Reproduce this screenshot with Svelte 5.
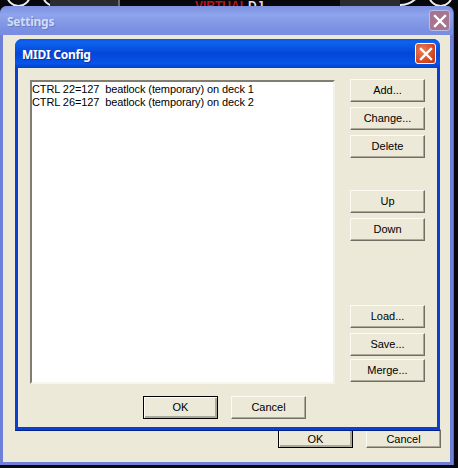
<script>
  const topButtons = ['Add...', 'Change...', 'Delete'];
  const moveButtons = ['Up', 'Down'];
  const fileButtons = ['Load...', 'Save...', 'Merge...'];
  const mappings = [
    'CTRL 22=127\u00a0\u00a0beatlock (temporary) on deck 1',
    'CTRL 26=127\u00a0\u00a0beatlock (temporary) on deck 2'
  ];
</script>

<div class="desktop">
  <div class="backdrop">
    <span class="ring ring-a"></span>
    <span class="ring ring-b"></span>
    <span class="ring ring-c"></span>
    <span class="ring ring-d"></span>
    <span class="panel panel-left"></span>
    <span class="panel panel-right"></span>
    <span class="logo">VIRTUAL<b>DJ</b></span>
  </div>

  <div class="window settings">
    <div class="titlebar">
      <span class="title">Settings</span>
      <span class="close faded">
        <svg viewBox="0 0 20 20" width="20" height="20"><path d="M5 5 L15 15 M15 5 L5 15" /></svg>
      </span>
    </div>
    <div class="body settings-footer">
      <button class="btn default">OK</button>
      <button class="btn">Cancel</button>
    </div>
  </div>

  <div class="window dialog">
    <div class="titlebar">
      <span class="title">MIDI Config</span>
      <span class="close">
        <svg viewBox="0 0 20 20" width="20" height="20"><path d="M5 5 L15 15 M15 5 L5 15" /></svg>
      </span>
    </div>
    <div class="body">
      <div class="main">
        <div class="list">
          {#each mappings as row}
            <div>{row}</div>
          {/each}
        </div>
        <div class="side">
          <div class="group">
            {#each topButtons as label}
              <button class="btn">{label}</button>
            {/each}
          </div>
          <div class="group move">
            {#each moveButtons as label}
              <button class="btn">{label}</button>
            {/each}
          </div>
          <div class="group files">
            {#each fileButtons as label}
              <button class="btn">{label}</button>
            {/each}
          </div>
        </div>
      </div>
      <div class="actions">
        <button class="btn default">OK</button>
        <button class="btn">Cancel</button>
      </div>
    </div>
  </div>
</div>

<style>
  :global(body) {
    margin: 0;
    background: #101018;
  }

  .desktop {
    position: relative;
    width: 458px;
    height: 468px;
    overflow: hidden;
    background: #08080c;
    font-family: "Liberation Sans", "Noto Sans", sans-serif;
    font-size: 11px;
    color: #000;
  }

  .backdrop {
    position: absolute;
    inset: 0;
  }

  .backdrop span {
    position: absolute;
  }

  .ring {
    box-sizing: border-box;
    border: 2px solid #ececec;
    border-radius: 50%;
  }

  .ring-a { left: 6px; top: -18px; width: 25px; height: 25px; }
  .ring-b { left: 42px; top: -18px; width: 25px; height: 25px; }
  .ring-c { left: 376px; top: -42px; width: 48px; height: 48px; }
  .ring-d { left: 428px; top: -18px; width: 25px; height: 25px; }

  .panel {
    top: 0;
    height: 8px;
    background: #2c2c2e;
  }

  .panel-left { left: 50px; width: 68px; border-right: 2px solid #6a6a6a; }
  .panel-right { left: 340px; width: 60px; }

  .logo {
    left: 195px;
    top: 0;
    color: #c01414;
    font-size: 12px;
    font-weight: bold;
    line-height: 12px;
    white-space: nowrap;
  }

  .logo b {
    margin-left: 1px;
    color: #e8d8d8;
  }

  .window {
    position: absolute;
    display: flex;
    flex-direction: column;
    box-sizing: border-box;
    overflow: hidden;
    border-radius: 7px 7px 0 0;
  }

  .settings {
    left: 0;
    top: 6px;
    width: 454px;
    height: 459px;
    background: #6f7fd8;
    padding: 0 3px 3px;
    border-right: 1px solid #5a67c0;
  }

  .dialog {
    left: 15px;
    top: 39px;
    width: 425px;
    height: 392px;
    background: #0a3fd0;
    padding: 0 3px 3px;
    border-bottom: 1px solid #00208c;
  }

  .titlebar {
    flex: none;
    display: flex;
    align-items: center;
    justify-content: space-between;
    height: 29px;
    margin: 0 -3px;
    padding: 0 4px 0 7px;
    box-sizing: border-box;
  }

  .settings .titlebar {
    padding-right: 3px;
    background: linear-gradient(#7d90e0, #8ea4ec 30%, #7b90e2 80%, #7a8ce0);
  }

  .dialog .titlebar {
    background: linear-gradient(#0a56e0, #0f62ee 12%, #0346d8 50%, #0654e8 85%, #033fc4);
  }

  .title {
    padding-top: 2px;
    font-family: "Noto Sans", sans-serif;
    font-size: 12px;
    font-weight: bold;
    letter-spacing: -0.25px;
    color: #fff;
    text-shadow: 1px 1px 0 #0f2fa0;
  }

  .settings .title {
    color: #d0dcf6;
    text-shadow: 1px 1px 0 #6a7cc8;
  }

  .close {
    display: flex;
    align-items: center;
    justify-content: center;
    box-sizing: border-box;
    width: 21px;
    height: 21px;
    border: 1px solid #fff;
    border-radius: 3px;
    background: radial-gradient(circle at 35% 35%, #e8805c, #d2421c 70%, #b83410);
  }

  .close svg {
    display: block;
    flex: none;
    fill: none;
    stroke: #fff;
    stroke-width: 2.4;
    stroke-linecap: square;
  }

  .close.faded {
    border-color: #b8bce8;
    background: #a77490;
  }

  .body {
    flex: 1;
    display: flex;
    flex-direction: column;
    background: #ece9d8;
    min-height: 0;
  }

  .settings-footer {
    flex-direction: row;
    justify-content: flex-end;
    align-items: flex-end;
    gap: 13px;
    padding: 0 9px 14px 0;
    box-sizing: border-box;
  }

  .dialog .body {
    padding: 12px 12px 8px 12px;
    box-sizing: border-box;
  }

  .main {
    flex: 1;
    display: flex;
    justify-content: space-between;
    min-height: 0;
  }

  .list {
    width: 305px;
    height: 304px;
    box-sizing: border-box;
    background: #fff;
    border: 2px solid;
    border-color: #807d72 #f4f2e8 #f8f6ee #807d72;
    padding: 1px 0;
    line-height: 13px;
    letter-spacing: -0.1px;
    white-space: nowrap;
  }

  .side {
    width: 75px;
    display: flex;
    flex-direction: column;
    margin-top: -1px;
  }

  .group {
    display: flex;
    flex-direction: column;
    gap: 5px;
  }

  .move {
    margin-top: 32px;
  }

  .files {
    margin-top: auto;
    padding-bottom: 2px;
  }

  .files .btn:last-child {
    margin-top: -2px;
  }

  .btn {
    width: 75px;
    height: 23px;
    flex: none;
    margin: 0;
    padding: 0 0 2px;
    box-sizing: border-box;
    background: #ece9d8;
    border: 1px solid;
    border-color: #fbfaf4 #716f64 #716f64 #fbfaf4;
    box-shadow: inset -1px -1px 0 #aca899;
    font: inherit;
    color: #000;
  }

  .btn.default {
    border: 1px solid #000;
    box-shadow: inset 1px 1px 0 #fbfaf4, inset -2px -2px 0 #aca899;
  }

  .actions {
    flex: none;
    display: flex;
    gap: 13px;
    margin-left: 113px;
    margin-top: 12px;
  }

  .settings-footer .btn {
    height: 19px;
    padding: 0;
  }
</style>
